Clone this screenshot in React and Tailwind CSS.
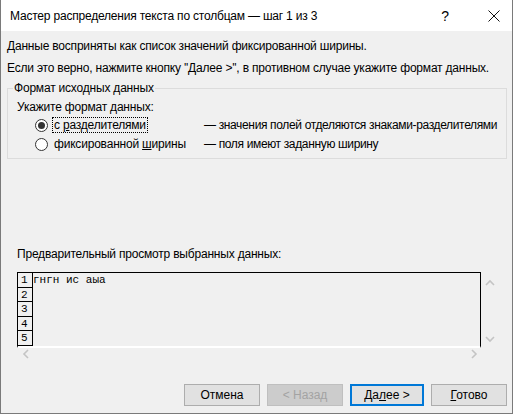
const ROWS = ['1', '2', '3', '4', '5'];

function Chevron({ dir }) {
  const paths = {
    up: 'M1 6 L5 2 L9 6',
    down: 'M1 2 L5 6 L9 2',
    left: 'M6 1 L2 5 L6 9',
    right: 'M2 1 L6 5 L2 9',
  };
  const vertical = dir === 'up' || dir === 'down';
  return (
    <svg
      width={vertical ? 10 : 8}
      height={vertical ? 8 : 10}
      viewBox={vertical ? '0 0 10 8' : '0 0 8 10'}
      className="block"
    >
      <path d={paths[dir]} fill="none" stroke="#c4c4c4" strokeWidth="1.6" />
    </svg>
  );
}

function Radio({ checked }) {
  return (
    <span className="flex h-[13px] w-[13px] items-center justify-center rounded-full border border-[#333] bg-white">
      {checked && <span className="h-[7px] w-[7px] rounded-full bg-[#333]" />}
    </span>
  );
}

function Button({ children, variant }) {
  return (
    <button
      className={
        variant === 'default'
          ? 'h-[22px] w-[74px] border-2 border-[#0078d7] bg-[#e1e1e1] text-black'
          : variant === 'disabled'
            ? 'h-[22px] w-[76px] border border-[#bfbfbf] bg-[#cccccc] text-[#a3a3a3]'
            : 'h-[22px] w-[76px] border border-[#adadad] bg-[#e1e1e1] text-black'
      }
    >
      {children}
    </button>
  );
}

export default function App() {
  return (
    <div className="h-[414px] w-[514px] bg-white font-['Liberation_Sans',Arial,sans-serif] text-[12px] leading-[16px] text-black">
      <div className="flex h-full w-[513px] flex-col border-x border-b border-[#7a7a7a]">
        {/* title bar */}
        <div className="flex h-[31px] shrink-0 items-center bg-white pl-[9px]">
          <span className="flex-1 tracking-[-0.2px]">Мастер распределения текста по столбцам — шаг 1 из 3</span>
          <span className="mr-[39px] text-[14px]">?</span>
          <svg width="12" height="12" viewBox="0 0 12 12" className="mr-[12px]">
            <path d="M0.5 0.5 L11.5 11.5 M11.5 0.5 L0.5 11.5" stroke="#111" strokeWidth="1" />
          </svg>
        </div>

        {/* body */}
        <div className="flex flex-1 flex-col bg-[#f0f0f0] pl-[6px] pr-[7px] tracking-[-0.2px]">
          <p className="mt-[7px]">Данные восприняты как список значений фиксированной ширины.</p>
          <p className="mt-[6px]">Если это верно, нажмите кнопку ''Далее &gt;'', в противном случае укажите формат данных.</p>

          <fieldset className="mt-[4px] h-[79px] border border-[#dcdcdc] px-[9px]">
            <legend className="-ml-[4px] px-[1px]">Формат исходных данных</legend>
            <p className="mt-[3px]">Укажите формат данных:</p>
            <div className="mt-[2px] grid grid-cols-[17px_152px_1fr] items-center whitespace-nowrap pl-[18px]">
              <Radio checked />
              <span className="w-fit border border-dotted border-black px-[1px] leading-[14px]">
                с <u>р</u>азделителями
              </span>
              <span className="tracking-[-0.35px]">— значения полей отделяются знаками-разделителями</span>
            </div>
            <div className="mt-[3px] grid grid-cols-[17px_152px_1fr] items-center whitespace-nowrap pl-[18px]">
              <Radio />
              <span className="pl-[2px]">
                фиксированной <u>ш</u>ирины
              </span>
              <span className="tracking-[-0.35px]">— поля имеют заданную ширину</span>
            </div>
          </fieldset>

          <p className="ml-[10px] mt-[87px]">Предварительный просмотр выбранных данных:</p>

          <div className="ml-[10px] mt-[10px] w-[481px]">
            <div className="flex">
              <div className="flex h-[76px] w-[464px] overflow-hidden border-x border-t border-black border-b-2 border-b-white">
                <div className="w-[15px] border-r border-black">
                  {ROWS.map((n) => (
                    <div
                      key={n}
                      className="h-[14.5px] border-b border-black pl-[3px] font-['Liberation_Mono',monospace] text-[11px] leading-[14px] tracking-normal"
                    >
                      {n}
                    </div>
                  ))}
                </div>
                <div className="flex-1 font-['Liberation_Mono',monospace] text-[11px] leading-[14px] tracking-normal">
                  <div className="h-[14.5px]">гнгн ис аыа</div>
                </div>
              </div>
              <div className="flex w-[17px] flex-col items-center justify-between pb-[5px] pt-[7px]">
                <Chevron dir="up" />
                <Chevron dir="down" />
              </div>
            </div>
            <div className="flex h-[12px] items-center justify-between pl-[5px] pr-[20px]">
              <Chevron dir="left" />
              <Chevron dir="right" />
            </div>
          </div>

          <div className="-mr-[2px] mt-[24px] flex justify-end gap-[7px] tracking-normal">
            <Button>Отмена</Button>
            <Button variant="disabled">&lt; Назад</Button>
            <Button variant="default">
              Да<u>л</u>ее &gt;
            </Button>
            <Button>
              <u>Г</u>отово
            </Button>
          </div>
        </div>
      </div>
    </div>
  );
}
